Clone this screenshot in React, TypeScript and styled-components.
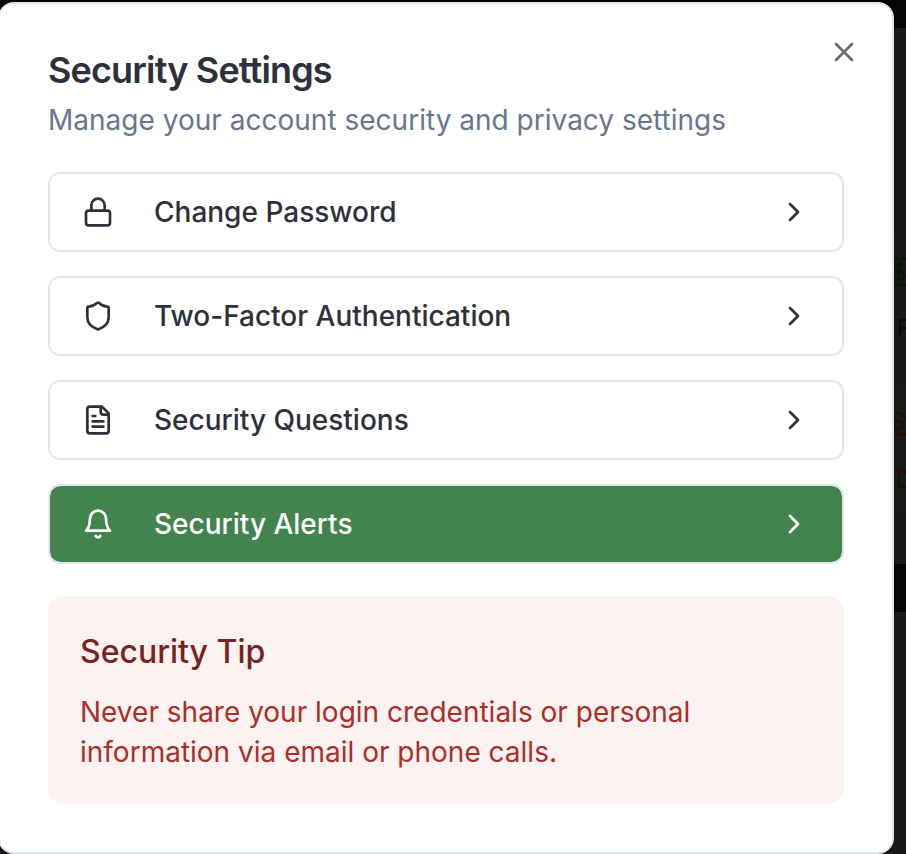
import React from "react";
import styled, { createGlobalStyle } from "styled-components";

const GlobalStyle = createGlobalStyle`
  * { box-sizing: border-box; }
  html, body { margin: 0; width: 906px; height: 854px; overflow: hidden; background: #181818; }
  body { font-family: Inter, "Liberation Sans", sans-serif; font-optical-sizing: none; }
  h2, h3, p { margin: 0; }
`;

const Page = styled.div`
  position: relative;
  width: 906px;
  height: 854px;
  overflow: hidden;
  background: linear-gradient(
    #040507 0 28px, #181818 28px 118px, #161616 118px 237px, #171916 237px 389px,
    #181a17 389px 514px, #181818 514px 564px, #040507 564px 612px, #181818 612px
  );
`;

const Backdrop = styled.svg`
  position: absolute;
  left: 894px;
  top: 0;
`;

const Dialog = styled.section`
  position: relative;
  width: 896px;
  height: 852px;
  margin: 2px 0 0 -2px;
  padding: 48px;
  display: flex;
  flex-direction: column;
  background: #fff;
  border: 2px solid #e1e6ef;
  border-radius: 16px;
  color: #2e303a;
`;

const Title = styled.h2`
  font-size: 36px;
  font-weight: 600;
  line-height: 36px;
  letter-spacing: -0.85px;
`;

const Description = styled.p`
  margin-top: 12px;
  font-size: 28px;
  line-height: 40px;
  letter-spacing: 0.01px;
  color: #68778d;
`;

const CloseButton = styled.button`
  position: absolute;
  top: 32px;
  right: 32px;
  width: 32px;
  height: 32px;
  padding: 0;
  border: 0;
  background: none;
  color: #6b6c74;
`;

const Actions = styled.div`
  display: flex;
  flex-direction: column;
  gap: 24px;
  margin-top: 32px;
`;

const Action = styled.button<{ $active?: boolean }>`
  display: flex;
  align-items: center;
  height: 80px;
  padding: 0 32px;
  border: 2px solid #e1e6ef;
  border-radius: 12px;
  background: ${(p) => (p.$active ? "#43834e" : "#fff")};
  background-clip: padding-box;
  color: ${(p) => (p.$active ? "#fff" : "#2e303a")};
  font: 500 28px/40px Inter, "Liberation Sans", sans-serif;
  font-optical-sizing: none;
  text-align: left;
`;

const ActionLabel = styled.span`
  flex: 1;
  margin-left: 40px;
`;

const Glyph = styled.svg`
  display: block;
  flex: none;
  width: 32px;
  height: 32px;
  fill: none;
  stroke: currentColor;
  stroke-width: 2;
  stroke-linecap: round;
  stroke-linejoin: round;
`;

const Tip = styled.aside`
  height: 208px;
  margin-top: 32px;
  padding: 32px;
  border-radius: 16px;
  background: #fcf2f1;
`;

const TipTitle = styled.h3`
  font-size: 32px;
  font-weight: 500;
  line-height: 48px;
  color: #772320;
`;

const TipText = styled.p`
  margin-top: 16px;
  font-size: 28px;
  line-height: 40px;
  color: #ab2e27;
`;

const icons = {
  lock: ["M5 11h14a2 2 0 0 1 2 2v7a2 2 0 0 1-2 2H5a2 2 0 0 1-2-2v-7a2 2 0 0 1 2-2z", "M7 11V7a5 5 0 0 1 10 0v4"],
  shield: ["M20 13c0 5-3.5 7.5-7.66 8.95a1 1 0 0 1-.67-.01C7.5 20.5 4 18 4 13V6a1 1 0 0 1 1-1c2 0 4.5-1.2 6.24-2.72a1.17 1.17 0 0 1 1.52 0C14.51 3.81 17 5 19 5a1 1 0 0 1 1 1z"],
  file: ["M15 2H6a2 2 0 0 0-2 2v16a2 2 0 0 0 2 2h12a2 2 0 0 0 2-2V7Z", "M14 2v4a2 2 0 0 0 2 2h4", "M10 9H8", "M16 13H8", "M16 17H8"],
  bell: ["M6 8a6 6 0 0 1 12 0c0 7 3 9 3 9H3s3-2 3-9", "M10.3 21a1.94 1.94 0 0 0 3.4 0"],
  chevron: ["m9 18 6-6-6-6"],
  close: ["M18 6 6 18", "m6 6 12 12"],
};

type IconName = keyof typeof icons;

function Icon({ name }: { name: IconName }) {
  return (
    <Glyph viewBox="0 0 24 24" aria-hidden="true">
      {icons[name].map((d) => <path key={d} d={d} />)}
    </Glyph>
  );
}

const actions: { icon: IconName; label: string; active?: boolean }[] = [
  { icon: "lock", label: "Change Password" },
  { icon: "shield", label: "Two-Factor Authentication" },
  { icon: "file", label: "Security Questions" },
  { icon: "bell", label: "Security Alerts", active: true },
];

export default function App() {
  return (
    <>
      <GlobalStyle />
      <Page>
        <Backdrop width="12" height="854" fill="none" strokeWidth="2.5" aria-hidden="true">
          <g stroke="#07160b">
            <path d="M0 259l3-1 3 2 3-2 3 1M0 285l3-1 3 2 3-2 3 1M5 262v20M10 265H3a3 3 0 0 0 0 7h4a3 3 0 0 1 0 7H0" />
          </g>
          <path d="M6 336v-16h6M6 328h6" stroke="#0b0c0a" />
          <g stroke="#200d07">
            <path d="M0 413h7l5 6M0 434h12" />
            <circle cx="4" cy="425" r="4" />
            <path d="M12 472H5v15h7" />
          </g>
        </Backdrop>
        <Dialog role="dialog" aria-label="Security Settings">
          <Title>Security Settings</Title>
          <Description>Manage your account security and privacy settings</Description>
          <CloseButton aria-label="Close"><Icon name="close" /></CloseButton>
          <Actions>
            {actions.map((a) => (
              <Action key={a.label} $active={a.active}>
                <Icon name={a.icon} />
                <ActionLabel>{a.label}</ActionLabel>
                <Icon name="chevron" />
              </Action>
            ))}
          </Actions>
          <Tip>
            <TipTitle>Security Tip</TipTitle>
            <TipText>Never share your login credentials or personal information via email or phone calls.</TipText>
          </Tip>
        </Dialog>
      </Page>
    </>
  );
}
